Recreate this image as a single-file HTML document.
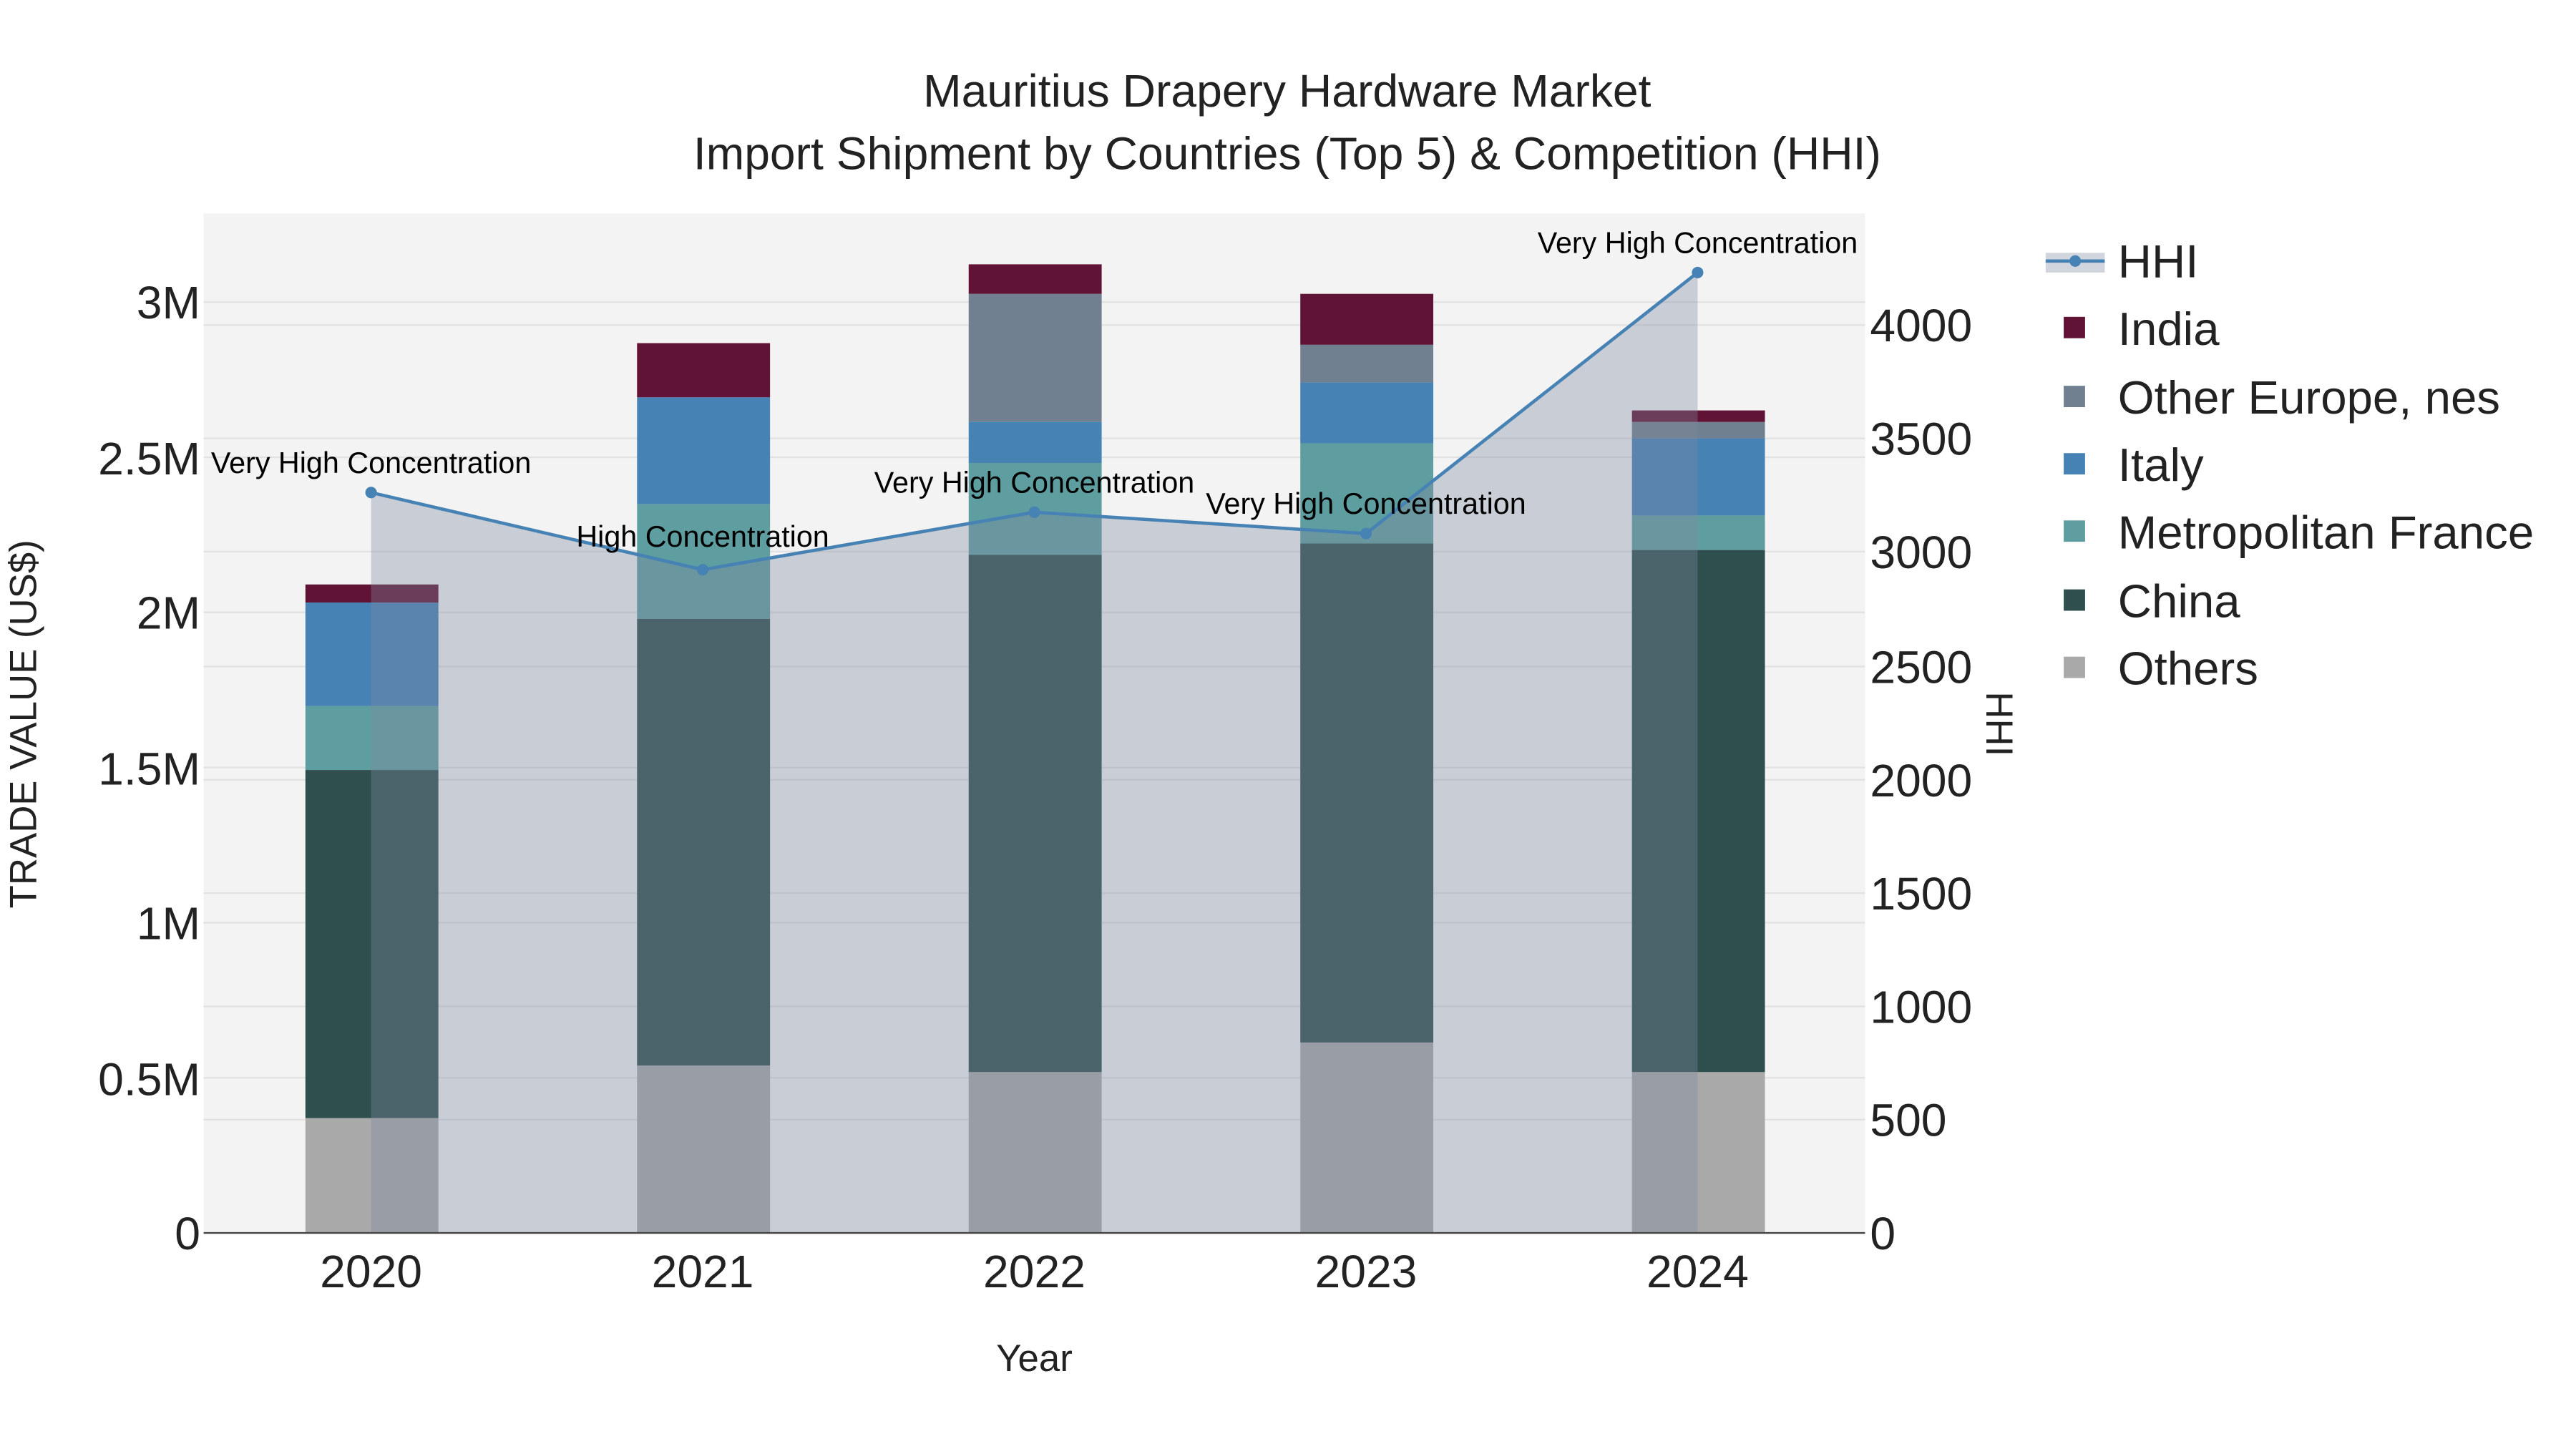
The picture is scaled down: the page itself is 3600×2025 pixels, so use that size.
<!DOCTYPE html>
<html><head><meta charset="utf-8"><style>html,body{margin:0;padding:0;background:#fff}svg{display:block}text{font-family:"Liberation Sans",sans-serif}</style></head><body>
<svg width="3600" height="2025" viewBox="0 0 1569 882.6" xmlns="http://www.w3.org/2000/svg">
<rect width="1569" height="882.6" fill="#fff"/>
<rect x="124" y="130" width="1012" height="621" fill="#f3f3f3"/>
<g stroke="#e2e2e2" stroke-width="1">
<line x1="124" x2="1136" y1="656.5" y2="656.5"/><line x1="124" x2="1136" y1="562" y2="562"/><line x1="124" x2="1136" y1="467.5" y2="467.5"/><line x1="124" x2="1136" y1="373" y2="373"/><line x1="124" x2="1136" y1="278.5" y2="278.5"/><line x1="124" x2="1136" y1="184" y2="184"/>
<line x1="124" x2="1136" y1="682" y2="682"/><line x1="124" x2="1136" y1="613" y2="613"/><line x1="124" x2="1136" y1="544" y2="544"/><line x1="124" x2="1136" y1="475" y2="475"/><line x1="124" x2="1136" y1="406" y2="406"/><line x1="124" x2="1136" y1="336" y2="336"/><line x1="124" x2="1136" y1="267" y2="267"/><line x1="124" x2="1136" y1="198" y2="198"/>
</g>
<g>
<rect x="186" y="681" width="81" height="70" fill="#a9a9a9"/><rect x="186" y="469" width="81" height="212" fill="#2f4f4f"/><rect x="186" y="430" width="81" height="39" fill="#5f9ea0"/><rect x="186" y="367" width="81" height="63" fill="#4682b4"/><rect x="186" y="356" width="81" height="11" fill="#611335"/>
<rect x="388" y="649" width="81" height="102" fill="#a9a9a9"/><rect x="388" y="377" width="81" height="272" fill="#2f4f4f"/><rect x="388" y="307" width="81" height="70" fill="#5f9ea0"/><rect x="388" y="242" width="81" height="65" fill="#4682b4"/><rect x="388" y="209" width="81" height="33" fill="#611335"/>
<rect x="590" y="653" width="81" height="98" fill="#a9a9a9"/><rect x="590" y="338" width="81" height="315" fill="#2f4f4f"/><rect x="590" y="282" width="81" height="56" fill="#5f9ea0"/><rect x="590" y="257" width="81" height="25" fill="#4682b4"/><rect x="590" y="179" width="81" height="78" fill="#708090"/><rect x="590" y="161" width="81" height="18" fill="#611335"/>
<rect x="792" y="635" width="81" height="116" fill="#a9a9a9"/><rect x="792" y="331" width="81" height="304" fill="#2f4f4f"/><rect x="792" y="270" width="81" height="61" fill="#5f9ea0"/><rect x="792" y="233" width="81" height="37" fill="#4682b4"/><rect x="792" y="210" width="81" height="23" fill="#708090"/><rect x="792" y="179" width="81" height="31" fill="#611335"/>
<rect x="994" y="653" width="81" height="98" fill="#a9a9a9"/><rect x="994" y="335" width="81" height="318" fill="#2f4f4f"/><rect x="994" y="314" width="81" height="21" fill="#5f9ea0"/><rect x="994" y="267" width="81" height="47" fill="#4682b4"/><rect x="994" y="257" width="81" height="10" fill="#708090"/><rect x="994" y="250" width="81" height="7" fill="#611335"/>
</g>
<polygon points="226,751 226,300 428,347 630,312 832,325 1034,166 1034,751" fill="rgb(125,136,159)" fill-opacity="0.355"/>
<polyline points="226,300 428,347 630,312 832,325 1034,166" fill="none" stroke="#4682b4" stroke-width="2"/>
<g fill="#4682b4"><circle cx="226" cy="300" r="3.5"/><circle cx="428" cy="347" r="3.5"/><circle cx="630" cy="312" r="3.5"/><circle cx="832" cy="325" r="3.5"/><circle cx="1034" cy="166" r="3.5"/></g>
<line x1="124" x2="1136" y1="751" y2="751" stroke="#444" stroke-width="1"/>
<g font-size="18" text-anchor="middle" fill="#000">
<text x="226" y="288">Very High Concentration</text><text x="428" y="333">High Concentration</text><text x="630" y="300">Very High Concentration</text><text x="832" y="313">Very High Concentration</text><text x="1034" y="154">Very High Concentration</text>
</g>
<g font-size="28" text-anchor="middle" fill="#222">
<text x="784" y="65">Mauritius Drapery Hardware Market</text>
<text x="784" y="103">Import Shipment by Countries (Top 5) &amp; Competition (HHI)</text>
</g>
<g font-size="28" text-anchor="end" fill="#222">
<text x="122" y="761">0</text><text x="122" y="667">0.5M</text><text x="122" y="572">1M</text><text x="122" y="478">1.5M</text><text x="122" y="383">2M</text><text x="122" y="289">2.5M</text><text x="122" y="194">3M</text>
</g>
<g font-size="28" fill="#222">
<text x="1139" y="761">0</text><text x="1139" y="692">500</text><text x="1139" y="623">1000</text><text x="1139" y="554">1500</text><text x="1139" y="485">2000</text><text x="1139" y="416">2500</text><text x="1139" y="346">3000</text><text x="1139" y="277">3500</text><text x="1139" y="208">4000</text>
</g>
<g font-size="28" text-anchor="middle" fill="#222">
<text x="226" y="784">2020</text><text x="428" y="784">2021</text><text x="630" y="784">2022</text><text x="832" y="784">2023</text><text x="1034" y="784">2024</text>
</g>
<text x="630" y="835" font-size="23" text-anchor="middle" fill="#222">Year</text>
<text transform="translate(22,441) rotate(-90)" font-size="23" text-anchor="middle" fill="#222">TRADE VALUE (US$)</text>
<text transform="translate(1210,441) rotate(90)" font-size="23" text-anchor="middle" fill="#222">HHI</text>
<rect x="1246" y="154" width="36" height="12" fill="rgb(125,136,159)" fill-opacity="0.355"/>
<line x1="1246" x2="1282" y1="159" y2="159" stroke="#4682b4" stroke-width="2"/><circle cx="1264" cy="159" r="3.5" fill="#4682b4"/>
<g><rect x="1257" y="193" width="13" height="13" fill="#611335"/><rect x="1257" y="235" width="13" height="13" fill="#708090"/><rect x="1257" y="276" width="13" height="13" fill="#4682b4"/><rect x="1257" y="317" width="13" height="13" fill="#5f9ea0"/><rect x="1257" y="359" width="13" height="13" fill="#2f4f4f"/><rect x="1257" y="400" width="13" height="13" fill="#a9a9a9"/></g>
<g font-size="28.5" fill="#222">
<text x="1290" y="169">HHI</text><text x="1290" y="210">India</text><text x="1290" y="252">Other Europe, nes</text><text x="1290" y="293">Italy</text><text x="1290" y="334">Metropolitan France</text><text x="1290" y="376">China</text><text x="1290" y="417">Others</text>
</g>
</svg>
</body></html>
